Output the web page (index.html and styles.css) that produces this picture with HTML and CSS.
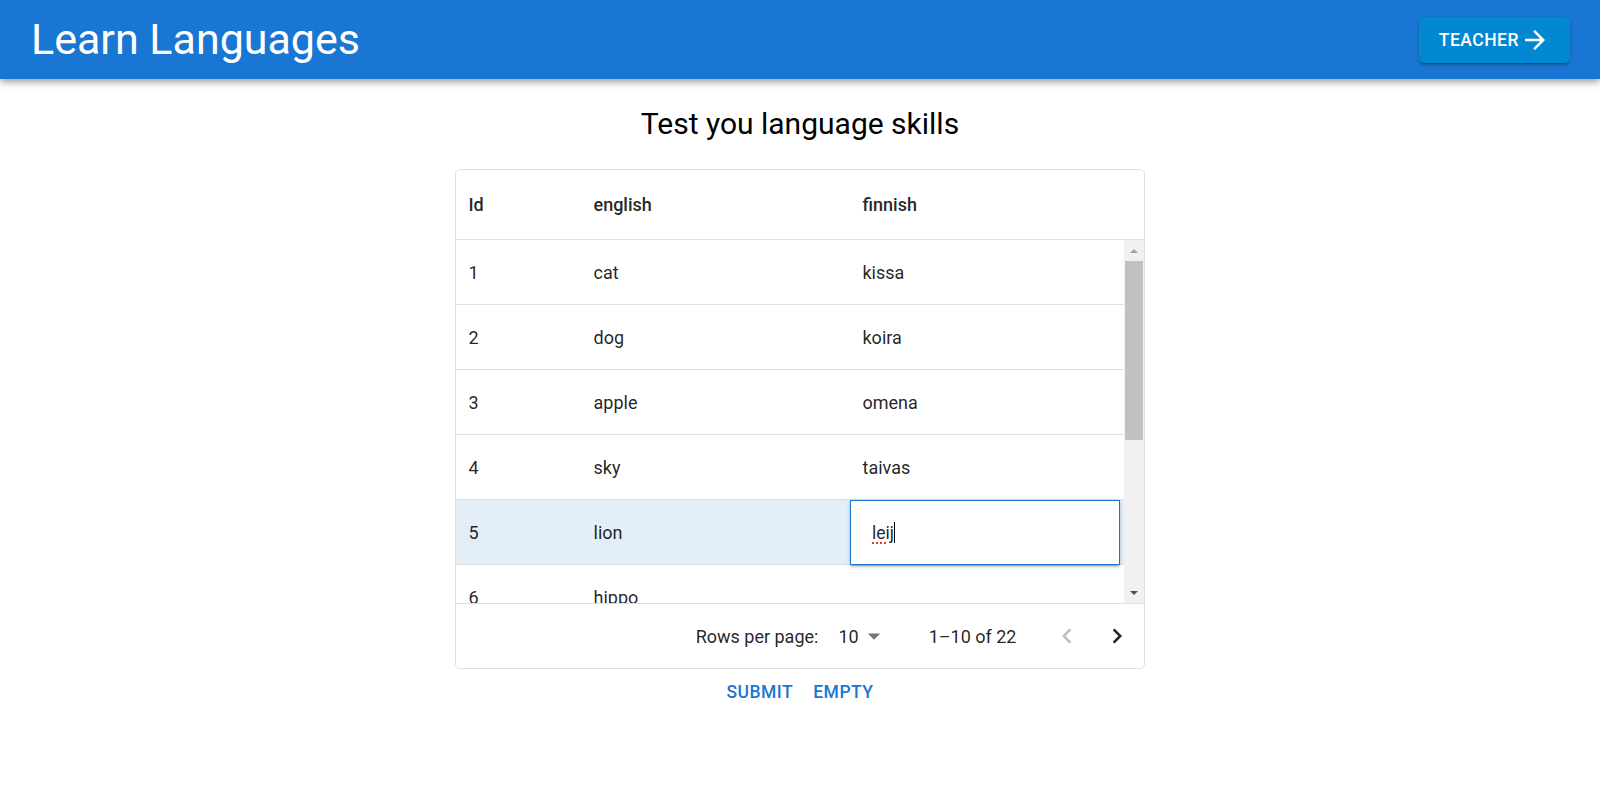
FILE: index.html
```html
<!DOCTYPE html>
<html lang="en">
<head>
<meta charset="utf-8">
<title>Learn Languages</title>
<link rel="stylesheet" href="styles.css">
</head>
<body>
<header class="appbar">
  <h1 class="brand">Learn Languages</h1>
  <button class="teacher">TEACHER<svg class="teacher-icon" viewBox="0 0 24 24"><path d="M12 4l-1.41 1.41L16.17 11H4v2h12.17l-5.58 5.59L12 20l8-8z"/></svg></button>
</header>
<main class="main">
  <h2 class="heading">Test you language skills</h2>
  <div class="grid">
    <div class="grid-head">
      <div class="cell col-id">Id</div>
      <div class="cell col-en">english</div>
      <div class="cell col-fi">finnish</div>
    </div>
    <div class="grid-body">
      <div class="rows">
        <div class="row"><div class="cell col-id">1</div><div class="cell col-en">cat</div><div class="cell col-fi">kissa</div></div>
        <div class="row"><div class="cell col-id">2</div><div class="cell col-en">dog</div><div class="cell col-fi">koira</div></div>
        <div class="row"><div class="cell col-id">3</div><div class="cell col-en">apple</div><div class="cell col-fi">omena</div></div>
        <div class="row"><div class="cell col-id">4</div><div class="cell col-en">sky</div><div class="cell col-fi">taivas</div></div>
        <div class="row row-selected"><div class="cell col-id">5</div><div class="cell col-en">lion</div><div class="cell-edit"><span class="edit-text">leij</span><span class="caret"></span></div></div>
        <div class="row"><div class="cell col-id">6</div><div class="cell col-en">hippo</div><div class="cell col-fi"></div></div>
      </div>
      <div class="vscroll">
        <div class="sb-arrow"><span class="tri-up"></span></div>
        <div class="sb-track"><div class="sb-thumb"></div></div>
        <div class="sb-arrow"><span class="tri-down"></span></div>
      </div>
    </div>
    <div class="grid-foot">
      <span class="foot-label">Rows per page:</span>
      <span class="foot-select">10<svg class="drop-icon" viewBox="0 0 24 24"><path d="M7 10l5 5 5-5z"/></svg></span>
      <span class="foot-count">1–10 of 22</span>
      <span class="foot-actions">
        <span class="icon-btn disabled"><svg viewBox="0 0 24 24"><path d="M15.41 16.59 10.83 12l4.58-4.59L14 6l-6 6 6 6 1.41-1.41z"/></svg></span>
        <span class="icon-btn"><svg viewBox="0 0 24 24"><path d="M8.59 16.59 13.17 12 8.59 7.41 10 6l6 6-6 6-1.41-1.41z"/></svg></span>
      </span>
    </div>
  </div>
  <div class="actions">
    <button class="text-btn">SUBMIT</button>
    <button class="text-btn">EMPTY</button>
  </div>
</main>
</body>
</html>
```
FILE: styles.css
```css
* { box-sizing: border-box; }
html, body { margin: 0; padding: 0; background: #fff; }
body {
  font-family: Roboto, "Liberation Sans", Arial, sans-serif;
  color: rgba(0,0,0,0.87);
}
.appbar {
  height: 79px;
  background: #1976d2;
  display: flex;
  align-items: center;
  justify-content: space-between;
  padding: 0 30px 0 31px;
  box-shadow: 0 2.5px 5px -1px rgba(0,0,0,0.2), 0 5px 6px 0 rgba(0,0,0,0.14), 0 1px 12px 0 rgba(0,0,0,0.12);
  position: relative;
  z-index: 2;
}
.brand {
  margin: 0;
  color: #fff;
  font-size: 43px;
  font-weight: 400;
  line-height: 1.2;
}
.teacher {
  height: 46px;
  display: flex;
  align-items: center;
  border: 0;
  border-radius: 5px;
  background: #0288d1;
  color: #fff;
  font-family: Roboto, "Liberation Sans", Arial, sans-serif;
  font-size: 17.5px;
  font-weight: 500;
  letter-spacing: 0.02857em;
  padding: 0 20px;
  box-shadow: 0 3px 1px -2px rgba(0,0,0,0.2), 0 2px 2px 0 rgba(0,0,0,0.14), 0 1px 5px 0 rgba(0,0,0,0.12);
}
.teacher-icon {
  width: 30px;
  height: 30px;
  fill: #fff;
  margin-left: 1px;
}
.main {
  display: flex;
  flex-direction: column;
  align-items: center;
}
.heading {
  margin: 25px 0;
  font-size: 30px;
  font-weight: 400;
  line-height: 40px;
  color: #000;
}
.grid {
  width: 690px;
  border: 1px solid #e0e0e0;
  border-radius: 5px;
  font-size: 18px;
}
.grid-head {
  display: flex;
  height: 70px;
  border-bottom: 1px solid #e0e0e0;
  font-weight: 500;
}
.cell {
  display: flex;
  align-items: center;
  padding: 0 12.5px;
  white-space: nowrap;
  overflow: hidden;
}
.col-id { width: 125px; }
.col-en { width: 269px; }
.col-fi { width: 270px; }
.grid-body {
  display: flex;
  height: 363px;
}
.rows {
  flex: 1;
  overflow: hidden;
}
.row {
  display: flex;
  height: 65px;
  border-bottom: 1px solid #e0e0e0;
}
.row-selected { background: #e3eef9; }
.cell-edit {
  width: 270px;
  height: 65px;
  background: #fff;
  border: 1px solid #1976d2;
  display: flex;
  align-items: center;
  padding-left: 21px;
  font-size: 17.5px;
  box-shadow: 0 3px 1px -2px rgba(0,0,0,0.2), 0 2px 2px 0 rgba(0,0,0,0.14), 0 1px 5px 0 rgba(0,0,0,0.12);
  position: relative;
  z-index: 1;
}
.edit-text {
  text-decoration: underline dotted #e53935;
  text-decoration-thickness: 2px;
  text-underline-offset: 4px;
}
.caret {
  display: inline-block;
  width: 1px;
  height: 21px;
  background: #000;
}
.vscroll {
  width: 20px;
  background: #f1f1f1;
  display: flex;
  flex-direction: column;
}
.sb-arrow {
  height: 21px;
  display: flex;
  align-items: center;
  justify-content: center;
}
.tri-up {
  width: 0; height: 0;
  border-left: 4px solid transparent;
  border-right: 4px solid transparent;
  border-bottom: 4px solid #a3a3a3;
}
.tri-down {
  width: 0; height: 0;
  border-left: 4px solid transparent;
  border-right: 4px solid transparent;
  border-top: 4px solid #505050;
}
.sb-track {
  flex: 1;
}
.sb-thumb {
  height: 179px;
  margin: 0 1px;
  background: #c1c1c1;
}
.grid-foot {
  height: 65px;
  border-top: 1px solid #e0e0e0;
  display: flex;
  align-items: center;
  justify-content: flex-end;
  padding-right: 2.5px;
}
.foot-select {
  display: inline-flex;
  align-items: center;
  margin-left: 10px;
  margin-right: 40px;
  padding-left: 10px;
}
.drop-icon {
  width: 30px;
  height: 30px;
  fill: rgba(0,0,0,0.54);
}
.foot-actions {
  display: flex;
  margin-left: 25px;
}
.icon-btn {
  width: 50px;
  height: 50px;
  display: flex;
  align-items: center;
  justify-content: center;
}
.icon-btn svg {
  width: 30px;
  height: 30px;
  fill: rgba(0,0,0,0.87);
}
.icon-btn.disabled svg { fill: rgba(0,0,0,0.26); }
.actions {
  display: flex;
}
.text-btn {
  border: 0;
  background: transparent;
  color: #1976d2;
  font-family: Roboto, "Liberation Sans", Arial, sans-serif;
  font-size: 17.5px;
  font-weight: 500;
  letter-spacing: 0.02857em;
  line-height: 1.75;
  padding: 7.5px 10px;
}
```
